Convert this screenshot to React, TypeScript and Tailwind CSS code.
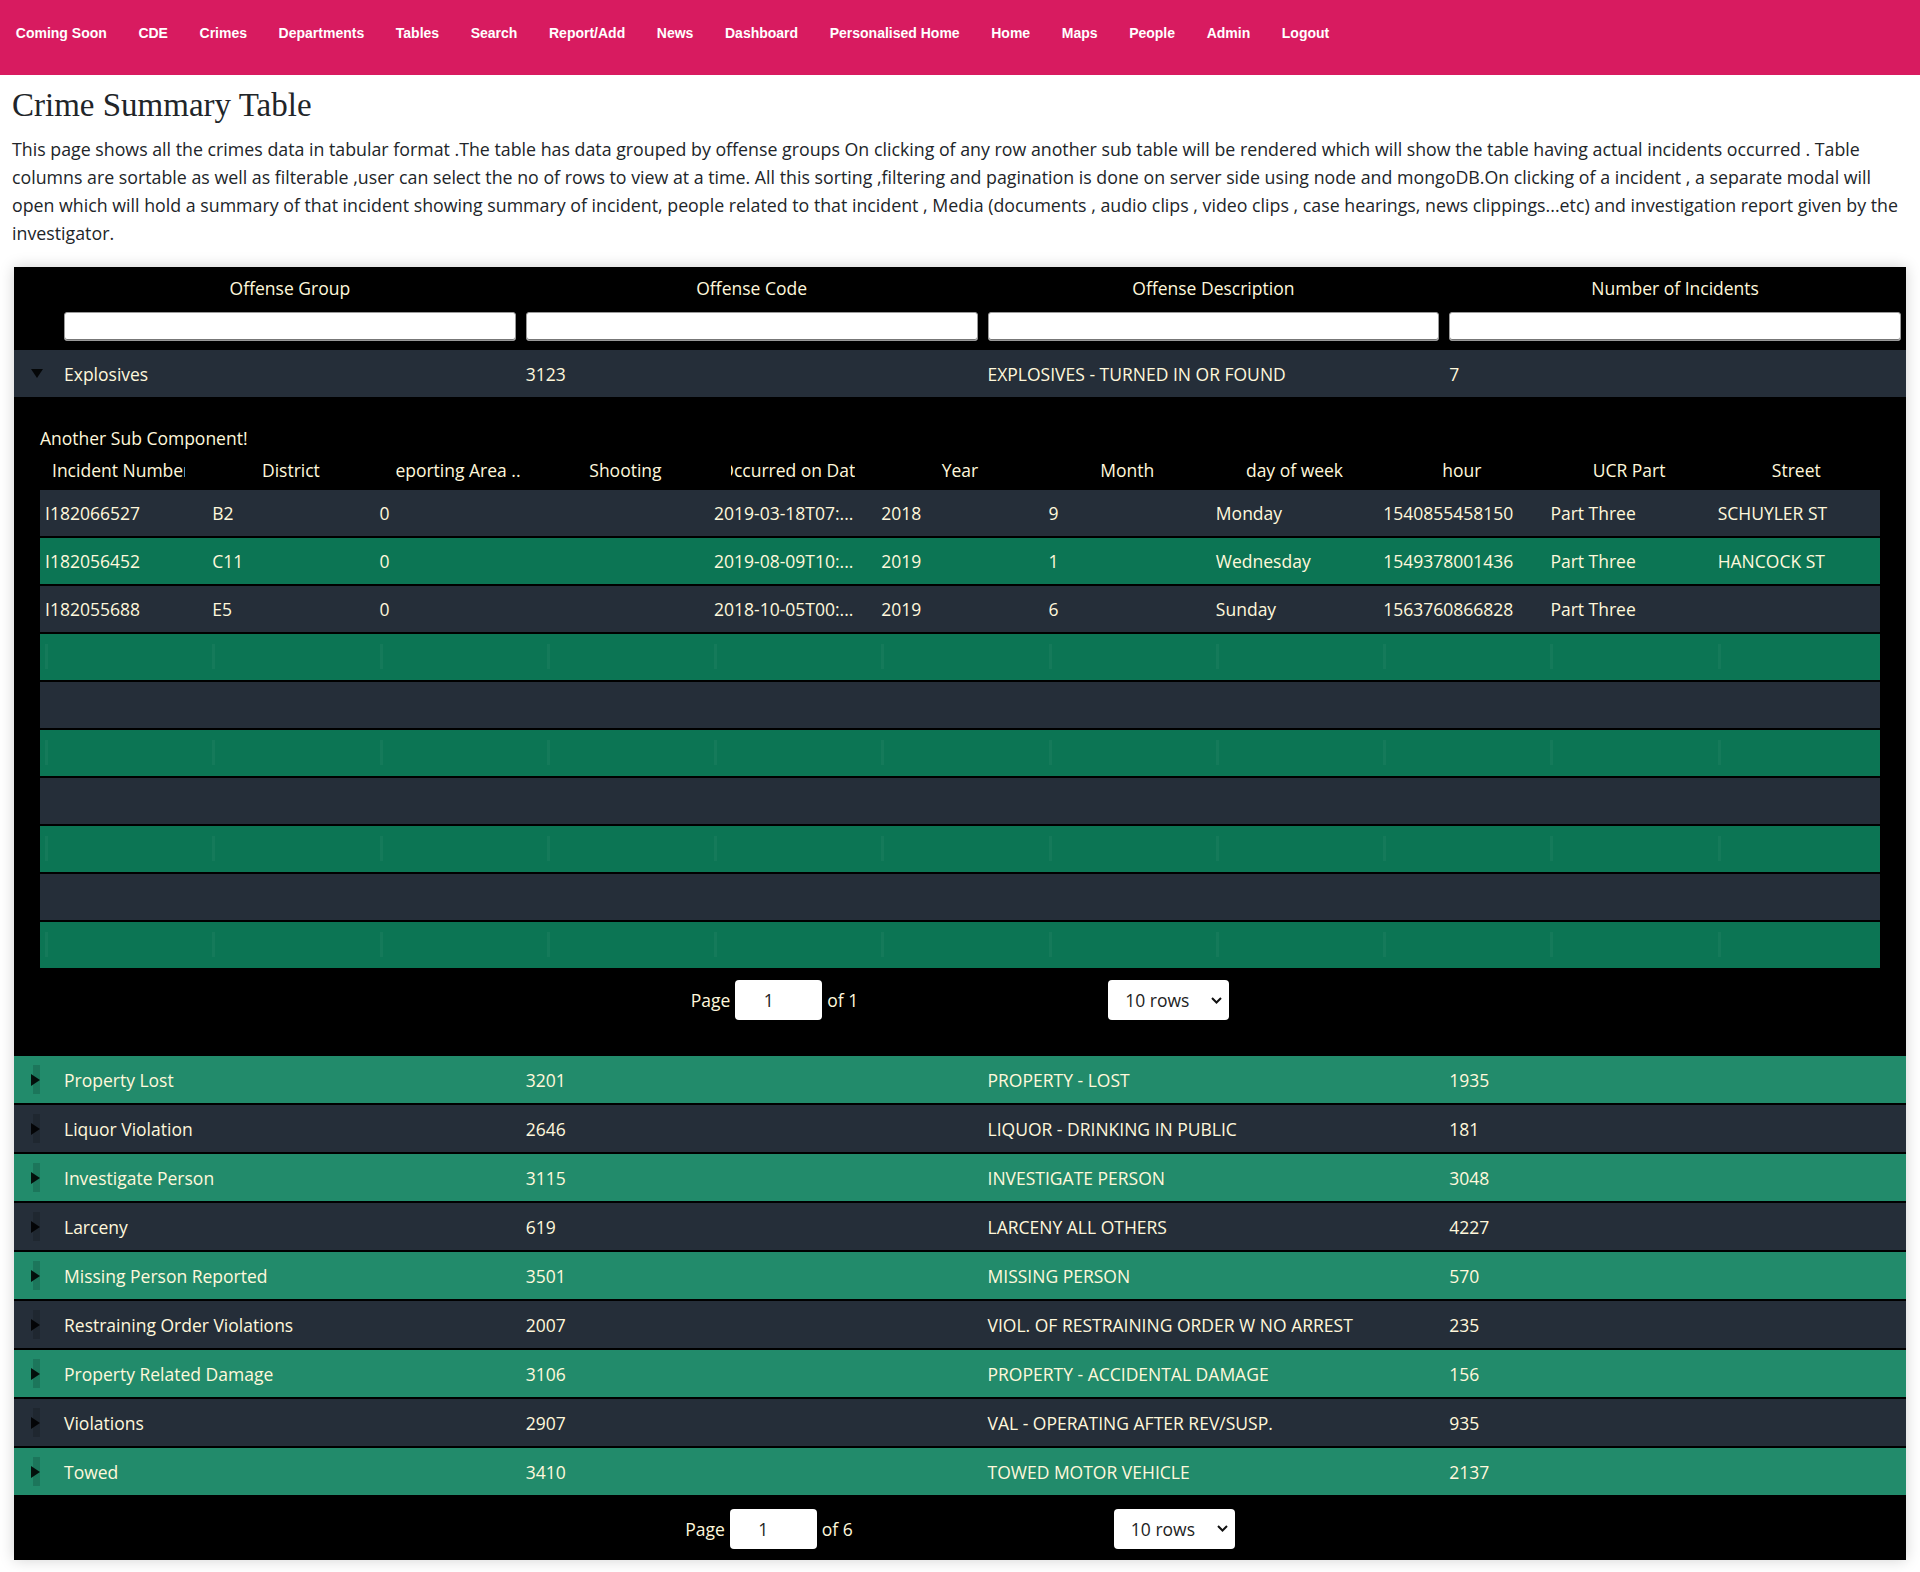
import React from 'react';

const navItems = [
  'Coming Soon', 'CDE', 'Crimes', 'Departments', 'Tables', 'Search', 'Report/Add', 'News',
  'Dashboard', 'Personalised Home', 'Home', 'Maps', 'People', 'Admin', 'Logout',
];

const outerRows: string[][] = [
  ['Property Lost', '3201', 'PROPERTY - LOST', '1935'],
  ['Liquor Violation', '2646', 'LIQUOR - DRINKING IN PUBLIC', '181'],
  ['Investigate Person', '3115', 'INVESTIGATE PERSON', '3048'],
  ['Larceny', '619', 'LARCENY ALL OTHERS', '4227'],
  ['Missing Person Reported', '3501', 'MISSING PERSON', '570'],
  ['Restraining Order Violations', '2007', 'VIOL. OF RESTRAINING ORDER W NO ARREST', '235'],
  ['Property Related Damage', '3106', 'PROPERTY - ACCIDENTAL DAMAGE', '156'],
  ['Violations', '2907', 'VAL - OPERATING AFTER REV/SUSP.', '935'],
  ['Towed', '3410', 'TOWED MOTOR VEHICLE', '2137'],
];

const subHeaders = [
  'Incident Number', 'District', 'Reporting Area ...', 'Shooting', 'Occurred on Date', 'Year',
  'Month', 'day of week', 'hour', 'UCR Part', 'Street',
];

const subRows: string[][] = [
  ['I182066527', 'B2', '0', '', '2019-03-18T07:...', '2018', '9', 'Monday', '1540855458150', 'Part Three', 'SCHUYLER ST'],
  ['I182056452', 'C11', '0', '', '2019-08-09T10:...', '2019', '1', 'Wednesday', '1549378001436', 'Part Three', 'HANCOCK ST'],
  ['I182055688', 'E5', '0', '', '2018-10-05T00:...', '2019', '6', 'Sunday', '1563760866828', 'Part Three', ''],
];

function Triangle({ open }: { open?: boolean }) {
  if (open) {
    return (
      <svg width="12" height="9" viewBox="0 0 12 9" className="block">
        <polygon points="0,0 12,0 6,9" fill="rgba(0,0,0,0.85)" />
      </svg>
    );
  }
  return (
    <svg width="9" height="12" viewBox="0 0 9 12" className="block">
      <polygon points="0,0 9,6 0,12" fill="rgba(0,0,0,0.88)" />
    </svg>
  );
}

function Expander({ open }: { open?: boolean }) {
  return (
    <div className="w-[45px] shrink-0 h-full flex items-center justify-center">
      {open ? (
        <Triangle open />
      ) : (
        <div className="w-[7px] h-[29px] bg-black/[0.15] flex items-center justify-center">
          <div className="-ml-[2px]">
            <Triangle />
          </div>
        </div>
      )}
    </div>
  );
}

function OuterRow({ cells, green, open }: { cells: string[]; green: boolean; open?: boolean }) {
  return (
    <div
      className={`flex items-center ${open ? 'h-[47px]' : 'h-[49px] border-b-2 border-black'} ${
        green ? 'bg-[#228b6b]' : 'bg-[#252e39]'
      }`}
    >
      <Expander open={open} />
      {cells.map((c, i) => (
        <div key={i} className="flex-1 min-w-0 px-[5px] truncate leading-[24px]">
          {c}
        </div>
      ))}
    </div>
  );
}

function Pagination({ of }: { of: number }) {
  return (
    <div className="flex h-full items-center">
      <div className="flex-1" />
      <div className="flex-[1.5] flex items-center justify-around">
        <div className="flex items-center leading-[24px]">
          <span>Page</span>
          <div className="ml-[5px] mr-[5px] w-[87px] h-[40px] bg-white rounded-[4px] flex items-center justify-center pr-[20px] text-[#222]">
            1
          </div>
          <span>of {of}</span>
        </div>
        <div className="w-[121px] h-[40px] bg-white rounded-[4px] flex items-center justify-between pl-[17px] pr-[7px] text-[#222] leading-[24px]">
          <span>10 rows</span>
          <svg width="11" height="7" viewBox="0 0 11 7" className="block">
            <polyline points="1,1 5.5,5.5 10,1" fill="none" stroke="#111" strokeWidth="2" />
          </svg>
        </div>
      </div>
      <div className="flex-1" />
    </div>
  );
}

function SubHeaderCell({ text, idx }: { text: string; idx: number }) {
  if (idx === 0) {
    return (
      <div className="flex-1 min-w-0 flex justify-start">
        <div className="ml-[12px] w-[133px] overflow-hidden flex justify-start">
          <span className="whitespace-nowrap shrink-0">{text}</span>
        </div>
      </div>
    );
  }
  if (idx === 2) {
    return (
      <div className="flex-1 min-w-0 flex justify-center">
        <div className="w-[124px] overflow-hidden flex justify-end">
          <span className="whitespace-nowrap shrink-0 -mr-[5px]">{text}</span>
        </div>
      </div>
    );
  }
  return (
    <div className="flex-1 min-w-0 flex justify-center">
      <div className="w-[124px] overflow-hidden flex justify-center">
        <span className="whitespace-nowrap shrink-0">{text}</span>
      </div>
    </div>
  );
}

function SubComponent() {
  const rows: (string[] | null)[] = [...subRows, null, null, null, null, null, null, null];
  return (
    <div className="px-[26px] pt-[29px] pb-[24px] bg-black">
      <div className="leading-[24px]">Another Sub Component!</div>
      <div className="flex h-[40px] items-center leading-[24px]">
        {subHeaders.map((h, i) => (
          <SubHeaderCell key={h} text={h} idx={i} />
        ))}
      </div>
      <div>
        {rows.map((r, i) => {
          const green = i % 2 === 1;
          const last = i === rows.length - 1;
          return (
            <div
              key={i}
              className={`flex ${last ? 'h-[46px]' : 'h-[48px] border-b-2 border-black'} ${
                green ? 'bg-[#0c7554]' : 'bg-[#252e39]'
              } ${r ? 'items-center' : 'items-start'}`}
            >
              {r
                ? r.map((c, j) => (
                    <div key={j} className="flex-1 min-w-0 px-[5px] whitespace-nowrap overflow-hidden leading-[24px]">
                      {c}
                    </div>
                  ))
                : Array.from({ length: 11 }).map((_, j) => (
                    <div key={j} className="flex-1 min-w-0 px-[5px] pt-[10px]">
                      {green ? <div className="w-[3px] h-[25px] bg-white/[0.04]" /> : null}
                    </div>
                  ))}
            </div>
          );
        })}
      </div>
      <div className="h-[64px]">
        <Pagination of={1} />
      </div>
    </div>
  );
}

export default function App() {
  return (
    <div className="min-h-[1572px] bg-white font-['Open_Sans',sans-serif]">
      <nav className="h-[75px] bg-[#d81b60] flex items-start pt-[24px] font-['Liberation_Sans',Arial,sans-serif] text-[14px] font-bold text-white leading-[18px]">
        {navItems.map((n) => (
          <span key={n} className="px-[15.8px] whitespace-nowrap">
            {n}
          </span>
        ))}
      </nav>

      <main className="px-[12px]">
        <h1 className="mt-[12px] font-['Liberation_Serif',serif] text-[33px] leading-[37px] font-normal text-[#212529]">
          Crime Summary Table
        </h1>
        <p className="mt-[11px] text-[17.8px] leading-[28px] text-[#212529]">
          <span className="block whitespace-nowrap">
            This page shows all the crimes data in tabular format .The table has data grouped by offense groups On clicking of any row another sub table will be rendered which will show the table having actual incidents occurred . Table
          </span>
          <span className="block whitespace-nowrap">
            columns are sortable as well as filterable ,user can select the no of rows to view at a time. All this sorting ,filtering and pagination is done on server side using node and mongoDB.On clicking of a incident , a separate modal will
          </span>
          <span className="block whitespace-nowrap">
            open which will hold a summary of that incident showing summary of incident, people related to that incident , Media (documents , audio clips , video clips , case hearings, news clippings...etc) and investigation report given by the
          </span>
          <span className="block whitespace-nowrap">investigator.</span>
        </p>
      </main>

      <section className="mx-[14px] mt-[20px] bg-black text-[#fff8dc] text-[17.5px] shadow-[0_0_14px_rgba(0,0,0,0.18)]">
        <div className="flex h-[41px] items-center leading-[24px]">
          <div className="w-[45px] shrink-0" />
          {['Offense Group', 'Offense Code', 'Offense Description', 'Number of Incidents'].map((h) => (
            <div key={h} className="flex-1 min-w-0 text-center truncate">
              {h}
            </div>
          ))}
        </div>
        <div className="flex h-[42px] pt-[4px]">
          <div className="w-[45px] shrink-0" />
          {[0, 1, 2, 3].map((i) => (
            <div key={i} className="flex-1 min-w-0 px-[5px]">
              <div className="h-[29px] bg-white border border-[#9a9a9a] rounded-[3px] shadow-[inset_0_-1px_0_#777]" />
            </div>
          ))}
        </div>

        <OuterRow cells={['Explosives', '3123', 'EXPLOSIVES - TURNED IN OR FOUND', '7']} green={false} open />
        <SubComponent />
        {outerRows.map((r, i) => (
          <OuterRow key={r[0]} cells={r} green={i % 2 === 0} />
        ))}

        <div className="h-[63px]">
          <Pagination of={6} />
        </div>
      </section>
      <div className="h-[12px]" />
    </div>
  );
}
